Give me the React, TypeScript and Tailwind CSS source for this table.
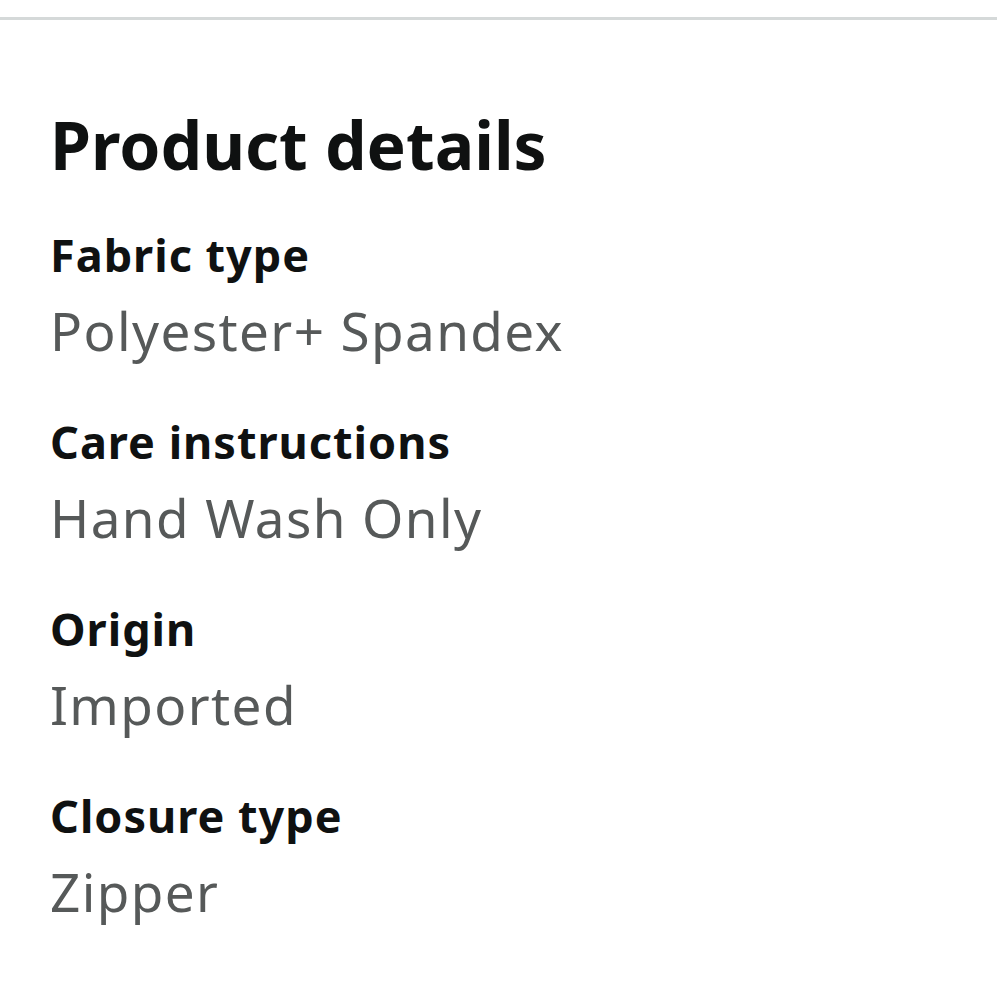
const details = [
  { label: "Fabric type", value: "Polyester+ Spandex" },
  { label: "Care instructions", value: "Hand Wash Only" },
  { label: "Origin", value: "Imported" },
  { label: "Closure type", value: "Zipper" },
];

function DetailRow({ label, value }: { label: string; value: string }) {
  return (
    <div className="flex flex-col">
      <p className="text-[45px] leading-[72px] font-bold tracking-[1px] text-[#0f1111]">{label}</p>
      <p className="text-[53px] leading-[80px] tracking-[1.4px] text-[#565959]">{value}</p>
    </div>
  );
}

export default function App() {
  return (
    <div className="min-h-screen bg-white font-['Noto_Sans',sans-serif]">
      <div className="pt-[17px]">
        <div className="h-[3px] bg-[#d5d9d9]" />
      </div>
      <div className="px-[50px] pt-[91px]">
        <h2 className="text-[66px] leading-[66px] font-bold text-[#0f1111]">Product details</h2>
        <div className="mt-[42px] flex flex-col gap-[35px]">
          {details.map((d, i) => (
            <DetailRow key={i} label={d.label} value={d.value} />
          ))}
        </div>
      </div>
    </div>
  );
}
